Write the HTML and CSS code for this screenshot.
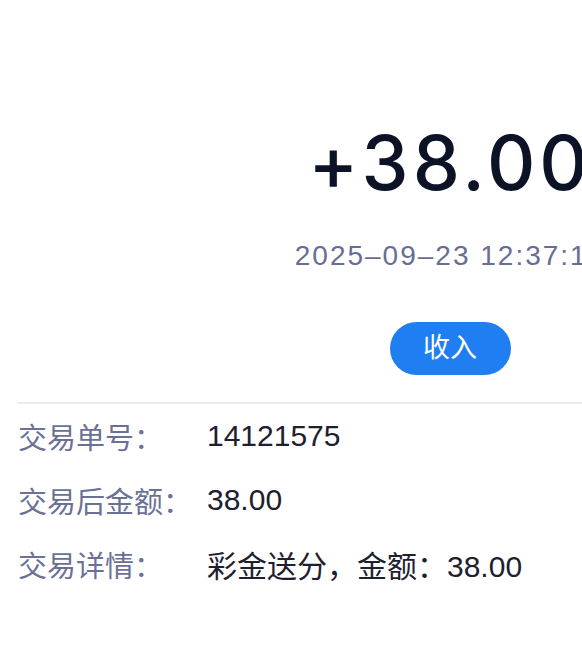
FILE: index.html
```html
<!DOCTYPE html>
<html>
<head>
    <title>交易详情</title>
    <link rel="stylesheet" href="styles.css">
</head>
<body>
    <div class="page">
        <!-- Amount summary -->
        <div class="summary">
            <div class="amount">+38.00</div>
            <div class="time">2025–09–23 12:37:15</div>
            <span class="tag">收入</span>
        </div>

        <!-- Transaction details -->
        <div class="details">
            <div class="row">
                <span class="label">交易单号：</span>
                <span class="value">14121575</span>
            </div>
            <div class="row">
                <span class="label">交易后金额：</span>
                <span class="value">38.00</span>
            </div>
            <div class="row">
                <span class="label">交易详情：</span>
                <span class="value">彩金送分，金额：38.00</span>
            </div>
        </div>
    </div>
</body>
</html>
```

FILE: styles.css
```css
body {
    margin: 0;
    padding: 0;
    background-color: #fff;
    font-family: 'Liberation Sans', 'Noto Sans CJK SC', sans-serif;
    overflow: hidden;
}

.page {
    width: 900px;
}

.summary {
    display: flex;
    flex-direction: column;
    align-items: center;
    padding-top: 126px;
}

.amount {
    font-family: 'Inter', sans-serif;
    font-weight: 500;
    font-size: 75px;
    line-height: 74px;
    letter-spacing: 4px;
    color: #0d1326;
}

.time {
    margin-top: 40px;
    font-size: 28px;
    line-height: 32px;
    letter-spacing: 2px;
    color: #686d94;
}

.tag {
    margin-top: 50px;
    width: 121px;
    height: 53px;
    line-height: 53px;
    text-align: center;
    border-radius: 27px;
    background-color: #1f7ef2;
    color: #fff;
    font-size: 27px;
}

.details {
    margin: 27px 0 0 17px;
    border-top: 2px solid #ececf0;
}

.row {
    display: flex;
    align-items: center;
    height: 64px;
}

.label {
    width: 189px;
    flex-shrink: 0;
    padding-left: 1px;
    font-size: 29px;
    color: #6b7196;
}

.value {
    font-size: 30px;
    color: #1e2030;
}
```
